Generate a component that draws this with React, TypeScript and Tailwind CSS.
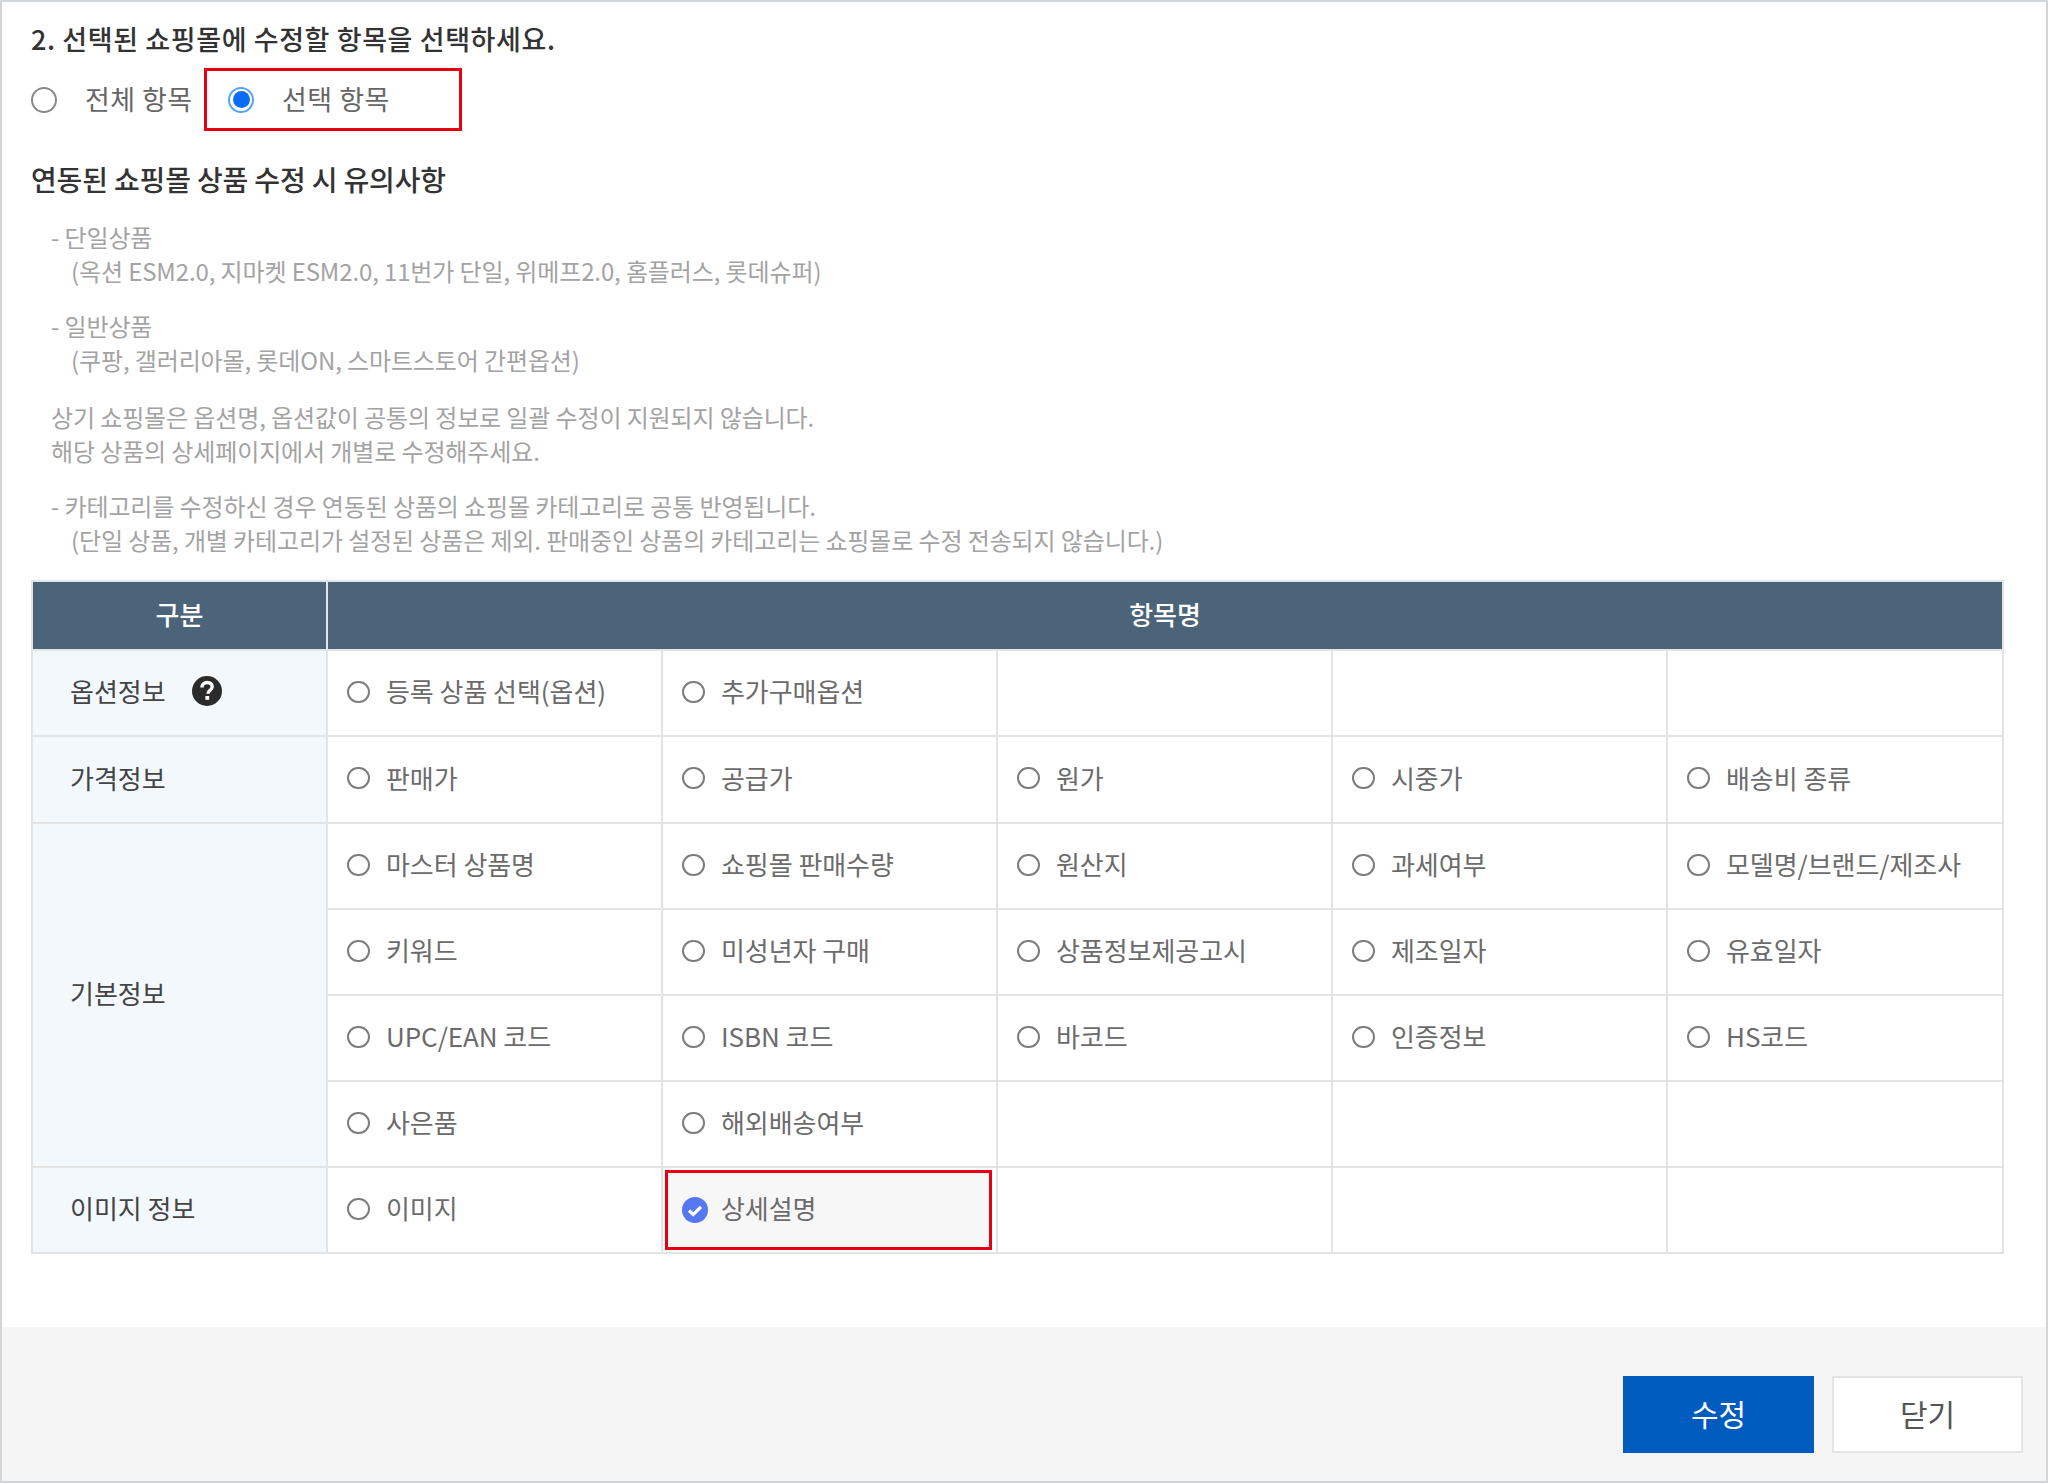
import React from "react";

const font = { fontFamily: '"Noto Sans CJK KR", "Noto Sans", sans-serif' };

function Radio({ label }: { label?: string }) {
  return (
    <label className="flex items-center gap-[16px] whitespace-nowrap text-[26px] tracking-[-0.05px] text-[#6b6b6b]">
      <span className="h-[22px] w-[23px] shrink-0 rounded-full border-2 border-[#7d7d7d] bg-white" />
      <span className="mb-[2px]">{label}</span>
    </label>
  );
}

function Checked({ label }: { label: string }) {
  return (
    <div className="flex h-full items-center gap-[13px] border-[3px] border-[#e60012] bg-[#f7f7f7] pl-[14px] text-[26px] tracking-[-0.05px] text-[#6b6b6b]">
      <svg viewBox="0 0 26 26" className="h-[26px] w-[26px] shrink-0">
        <circle cx="13" cy="13" r="13" fill="#5578f0" />
        <path d="M7 13.5l4.2 4L19 9.8" fill="none" stroke="#fff" strokeWidth="3.2" />
      </svg>
      <span className="mb-[5px]">{label}</span>
    </div>
  );
}

const thLabel = "border-2 border-[#e2e4e6] bg-[#f3f8fd] pb-[5px] pl-[37px] text-left text-[26px] font-normal text-[#444]";
const td = "border-2 border-[#e2e4e6] pb-[3px] pl-[19px]";

function Row({ items }: { items: string[] }) {
  const cells = [0, 1, 2, 3, 4];
  return (
    <>
      {cells.map((i) => (
        <td key={i} className={td}>
          {items[i] ? <Radio label={items[i]} /> : null}
        </td>
      ))}
    </>
  );
}

export default function App() {
  return (
    <div style={font} className="flex h-[1483px] w-[2048px] flex-col border-2 border-[#d2d6da] bg-white">
      <div className="flex-1 px-[29px] pt-[19px]">
        <h2 className="text-[27px] leading-[36px] font-medium tracking-[0.6px] text-[#333]">
          2. 선택된 쇼핑몰에 수정할 항목을 선택하세요.
        </h2>
        <div className="mt-[11px] flex h-[63px] items-center">
          <label className="flex w-[173px] items-center gap-[28px] text-[27px] tracking-[0.4px] text-[#666]">
            <span className="h-[26px] w-[26px] shrink-0 rounded-full border-2 border-[#8a8a8a]" />
            <span className="whitespace-nowrap">전체 항목</span>
          </label>
          <div className="flex h-[63px] w-[258px] items-center gap-[28px] border-[3px] border-[#e60012] pl-[21px] text-[27px] tracking-[0.5px] text-[#666]">
            <span className="flex h-[26px] w-[26px] shrink-0 items-center justify-center rounded-full border-2 border-[#5ba4f5]">
              <span className="h-[17px] w-[17px] rounded-full bg-[#0a6cf0]" />
            </span>
            <span className="whitespace-nowrap">선택 항목</span>
          </div>
        </div>
        <h3 className="mt-[30px] text-[28px] leading-[36px] font-medium tracking-[-0.15px] text-[#333]">
          연동된 쇼핑몰 상품 수정 시 유의사항
        </h3>
        <div className="mt-[23px] flex flex-col gap-[21px] pl-[20px] text-[24px] leading-[34px] tracking-[-0.12px] text-[#a3a3a3]">
          <p>
            - 단일상품
            <br />
            <span className="pl-[20px]">(옥션 ESM2.0, 지마켓 ESM2.0, 11번가 단일, 위메프2.0, 홈플러스, 롯데슈퍼)</span>
          </p>
          <p>
            - 일반상품
            <br />
            <span className="pl-[20px]">(쿠팡, 갤러리아몰, 롯데ON, 스마트스토어 간편옵션)</span>
          </p>
          <p className="mt-[2px]">
            상기 쇼핑몰은 옵션명, 옵션값이 공통의 정보로 일괄 수정이 지원되지 않습니다.
            <br />
            해당 상품의 상세페이지에서 개별로 수정해주세요.
          </p>
          <p>
            - 카테고리를 수정하신 경우 연동된 상품의 쇼핑몰 카테고리로 공통 반영됩니다.
            <br />
            <span className="pl-[20px]">(단일 상품, 개별 카테고리가 설정된 상품은 제외. 판매중인 상품의 카테고리는 쇼핑몰로 수정 전송되지 않습니다.)</span>
          </p>
        </div>
        <table className="mt-[23px] w-[1971px] table-fixed border-collapse">
          <colgroup>
            <col className="w-[295px]" />
            <col className="w-[335px]" />
            <col className="w-[335px]" />
            <col className="w-[335px]" />
            <col className="w-[335px]" />
            <col className="w-[336px]" />
          </colgroup>
          <thead>
            <tr className="h-[69px] bg-[#4c6479] text-[26px] font-medium text-white">
              <th className="border-2 border-[#e2e4e6] pb-[5px] font-medium">구분</th>
              <th colSpan={5} className="border-2 border-[#e2e4e6] pb-[5px] font-medium">항목명</th>
            </tr>
          </thead>
          <tbody>
            <tr className="h-[86px]">
              <th className={thLabel}>
                <span className="flex items-center gap-[26px]">
                  옵션정보
                  <svg viewBox="0 0 30 30" className="h-[30px] w-[30px]">
                    <circle cx="15" cy="15" r="15" fill="#2b2b2b" />
                    <path d="M10 11.5c0-3.2 2.2-5 5.2-5s5 1.7 5 4.2c0 3.8-4.2 3.6-4.2 7" fill="none" stroke="#fff" strokeWidth="3.4" />
                    <rect x="13.4" y="20" width="3.8" height="3.8" fill="#fff" />
                  </svg>
                </span>
              </th>
              <Row items={["등록 상품 선택(옵션)", "추가구매옵션"]} />
            </tr>
            <tr className="h-[87px]">
              <th className={thLabel}>가격정보</th>
              <Row items={["판매가", "공급가", "원가", "시중가", "배송비 종류"]} />
            </tr>
            <tr className="h-[86px]">
              <th rowSpan={4} className={thLabel}>기본정보</th>
              <Row items={["마스터 상품명", "쇼핑몰 판매수량", "원산지", "과세여부", "모델명/브랜드/제조사"]} />
            </tr>
            <tr className="h-[86px]">
              <Row items={["키워드", "미성년자 구매", "상품정보제공고시", "제조일자", "유효일자"]} />
            </tr>
            <tr className="h-[86px]">
              <Row items={["UPC/EAN 코드", "ISBN 코드", "바코드", "인증정보", "HS코드"]} />
            </tr>
            <tr className="h-[86px]">
              <Row items={["사은품", "해외배송여부"]} />
            </tr>
            <tr className="h-[86px]">
              <th className={thLabel}>이미지 정보</th>
              <td className={td}>
                <Radio label="이미지" />
              </td>
              <td className="h-[86px] border-2 border-[#e2e4e6] py-[2px] pr-[4px] pl-[2px]">
                <Checked label="상세설명" />
              </td>
              <td className={td} />
              <td className={td} />
              <td className={td} />
            </tr>
          </tbody>
        </table>
      </div>
      <div className="flex h-[154px] items-start justify-end gap-[18px] bg-[#f5f5f6] pt-[49px] pr-[23px]">
        <button className="h-[77px] w-[191px] bg-[#005bbf] pb-[2px] text-[30px] text-white">수정</button>
        <button className="h-[77px] w-[191px] border-2 border-[#e3e4e6] bg-white pb-[2px] text-[30px] text-[#555]">닫기</button>
      </div>
    </div>
  );
}
